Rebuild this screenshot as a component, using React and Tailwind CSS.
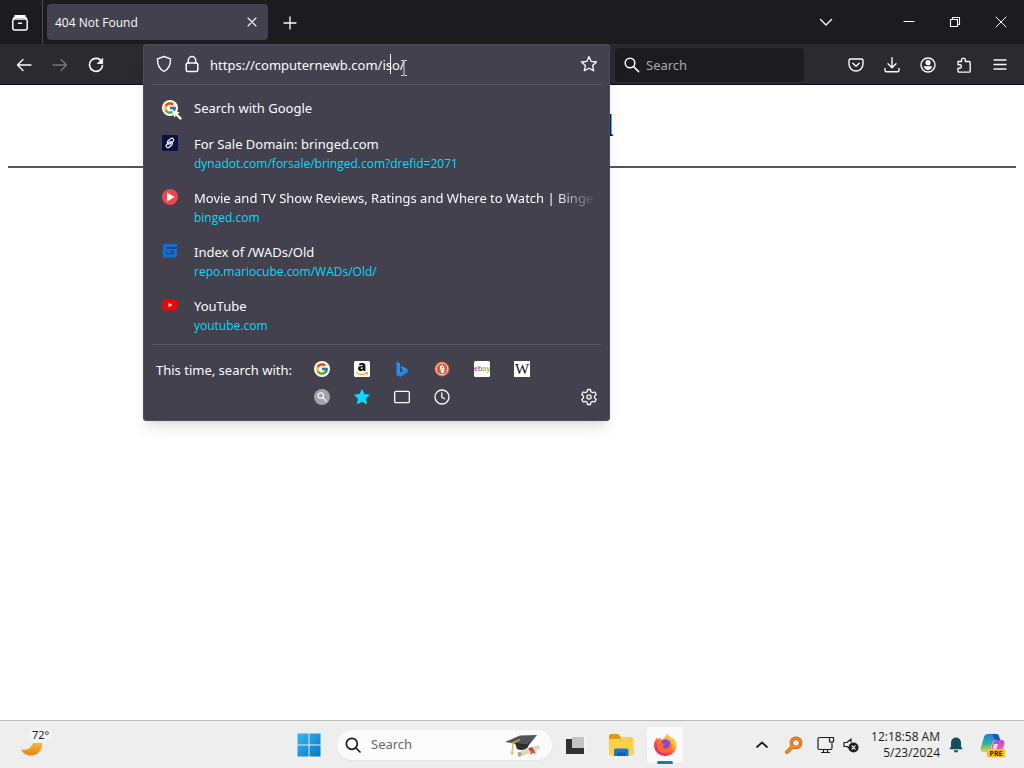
import React from "react";
import { FcGoogle } from "react-icons/fc";

function Icon({ children, className = "size-4", viewBox = "0 0 16 16", width = 1.3 }) {
  return (
    <svg
      viewBox={viewBox}
      className={`shrink-0 ${className}`}
      fill="none"
      stroke="currentColor"
      strokeWidth={width}
      strokeLinecap="round"
      strokeLinejoin="round"
      aria-hidden="true"
    >
      {children}
    </svg>
  );
}

function BarButton({ label, className = "w-9 pt-0.5", children }) {
  return (
    <button type="button" aria-label={label} className={`flex h-9 shrink-0 items-center justify-center ${className}`}>
      {children}
    </button>
  );
}

function GoogleIcon() {
  return (
    <span className="flex size-4 items-center justify-center rounded-full bg-white">
      <FcGoogle className="size-3.5" />
    </span>
  );
}

function TabStrip() {
  return (
    <header className="flex h-11 shrink-0 items-center bg-[#1c1b20] text-[#fbfbfe]">
      <div className="flex h-11 w-[43px] shrink-0 items-center justify-center border-r border-[#4a4950] pr-0.5">
        <BarButton label="Recent browsing">
          <Icon className="size-[18px]" viewBox="0 0 18 18" width={1.5}>
            <path d="M4 1.800h10M3.800 5h10.400a2 2 0 0 1 2 2v7a2 2 0 0 1-2 2H3.800a2 2 0 0 1-2-2V7a2 2 0 0 1 2-2zM2.500 5.200c0-1.300.7-2 1.800-2h9.400c1.100 0 1.800.7 1.800 2M7.500 9.200h3" />
          </Icon>
        </BarButton>
      </div>
      <div className="ml-1 flex h-9 w-[221px] items-center justify-between rounded bg-[#42414d] pl-2">
        <button type="button" className="pt-0.5 font-['Open_Sans',sans-serif] text-xs">404 Not Found</button>
        <button type="button" aria-label="Close tab" className="flex size-8 items-center justify-center">
          <Icon className="size-2.5" viewBox="0 0 10 10" width={1.1}>
            <path d="M1 1l8 8M9 1L1 9" />
          </Icon>
        </button>
      </div>
      <BarButton label="New tab" className="ml-1 w-9 pt-0.5">
        <Icon className="size-3.5" viewBox="0 0 14 14" width={1.300}>
          <path d="M7 1v12M1 7h12" />
        </Icon>
      </BarButton>
      <div className="flex-1" />
      <BarButton label="List all tabs" className="mr-[42px] w-9">
        <Icon className="size-3.5" viewBox="0 0 14 14" width={1.400}>
          <path d="M1.500 4.500L7 10l5.500-5.500" />
        </Icon>
      </BarButton>
      <BarButton label="Minimize" className="w-[46px]">
        <Icon className="size-3" viewBox="0 0 12 12" width={1.100}>
          <path d="M1 5.500h10" />
        </Icon>
      </BarButton>
      <BarButton label="Restore" className="w-[46px]">
        <Icon className="size-3" viewBox="0 0 12 12" width={1.100}>
          <path d="M1.500 3.500h7v7h-7zM3.500 3.500v-2h7v7h-2" />
        </Icon>
      </BarButton>
      <BarButton label="Close" className="w-[46px]">
        <Icon className="size-3" viewBox="0 0 12 12" width={1}>
          <path d="M1 1l10 10M11 1L1 11" />
        </Icon>
      </BarButton>
    </header>
  );
}

const suggestions = [
  {
    title: "For Sale Domain: bringed.com",
    url: "dynadot.com/forsale/bringed.com?drefid=2071",
    icon: (
      <svg viewBox="0 0 16 16" className="size-4" aria-hidden="true">
        <rect width="16" height="16" rx="1" fill="#0b1045" />
        <g fill="none" stroke="#fff" strokeWidth="1.200" transform="rotate(-40 8 8)">
          <rect x="2.800" y="7" width="7" height="3.600" rx="1.800" />
          <rect x="6.200" y="5.100" width="7" height="3.600" rx="1.800" />
        </g>
      </svg>
    ),
  },
  {
    title: "Movie and TV Show Reviews, Ratings and Where to Watch | Binge",
    url: "binged.com",
    fade: true,
    icon: (
      <svg viewBox="0 0 16 16" className="size-4" aria-hidden="true">
        <circle cx="8" cy="8" r="8" fill="#f0454b" />
        <path d="M5 3.600l7.600 4.400L5 12.400z" fill="#fff" />
      </svg>
    ),
  },
  {
    title: "Index of /WADs/Old",
    url: "repo.mariocube.com/WADs/Old/",
    icon: (
      <svg viewBox="0 0 16 16" className="size-4" aria-hidden="true">
        <path d="M2.500 1H15v3.200H4.700v1.600H15V12.500L13 14.500H1V2.500z" fill="#0f6fd6" />
        <path d="M4.500 4.700H15M4.500 8.500v2.300h6.800V8.300H7.500" fill="none" stroke="#1c3f73" strokeWidth="1.100" />
      </svg>
    ),
  },
  {
    title: "YouTube",
    url: "youtube.com",
    icon: (
      <svg viewBox="0 0 16 16" className="size-4" aria-hidden="true">
        <rect x="0.500" y="2.500" width="15" height="11" rx="3.500" fill="#f00" />
        <path d="M6.500 5.800l3.800 2.200-3.800 2.200z" fill="#fff" />
      </svg>
    ),
  },
];

const engines = [
  { name: "Google", icon: <GoogleIcon /> },
  {
    name: "Amazon",
    icon: (
      <svg viewBox="0 0 16 16" className="size-4 overflow-visible" aria-hidden="true">
        <rect width="16" height="16" rx="1.500" fill="#fff" />
        <text x="7.800" y="10" textAnchor="middle" fontFamily="Open Sans, sans-serif" fontWeight="800" fontSize="14" fill="#111">a</text>
        <path d="M2.500 11.500c3 2.700 7.500 2.700 10.500.6M11.500 11.300l2.200.2-.6 2" fill="none" stroke="#f5a623" strokeWidth="1.100" />
      </svg>
    ),
  },
  {
    name: "Bing",
    icon: (
      <svg viewBox="0 0 16 16" className="size-4" aria-hidden="true">
        <defs>
          <linearGradient id="bing" x1="0" y1="0" x2="1" y2="1">
            <stop offset="0" stopColor="#36b7f5" />
            <stop offset="1" stopColor="#1767d3" />
          </linearGradient>
        </defs>
        <path d="M2.500.5l3.500 1.700v9.500l-3.500 2z" fill="#2c8df0" />
        <path d="M7 5l5 2.200c2.700 1.100 2.500 3.800.8 5L6.300 15.900 2.500 13.700l6.500-3.700-1-1.400z" fill="url(#bing)" />
      </svg>
    ),
  },
  {
    name: "DuckDuckGo",
    icon: (
      <svg viewBox="0 0 16 16" className="size-4" aria-hidden="true">
        <circle cx="8" cy="8" r="7.500" fill="#de5833" />
        <circle cx="8" cy="8" r="5.900" fill="none" stroke="#fff" strokeWidth=".9" />
        <path d="M5.800 5.200c1.500-1.600 4.200-.9 4.400 1.600l.3 2.700-1.300 2.700c-1 .2-1.800-.2-2.100-.8z" fill="#fff" />
        <path d="M8.500 8h3v1.200h-3z" fill="#fdb515" />
        <circle cx="8.400" cy="6.300" r=".6" fill="#2d4f8e" />
      </svg>
    ),
  },
  {
    name: "eBay",
    icon: (
      <svg viewBox="0 0 16 16" className="size-4 overflow-visible" aria-hidden="true">
        <rect width="16" height="16" rx="1.500" fill="#fff" />
        <text x="8" y="10" textAnchor="middle" fontFamily="Liberation Sans, sans-serif" fontSize="7.500">
          <tspan fill="#c0286c">e</tspan>
          <tspan fill="#3a4fc4">b</tspan>
          <tspan fill="#b8942a">a</tspan>
          <tspan fill="#6fa512">y</tspan>
        </text>
      </svg>
    ),
  },
  {
    name: "Wikipedia",
    icon: (
      <svg viewBox="0 0 16 16" className="size-4 overflow-visible" aria-hidden="true">
        <rect width="16" height="16" fill="#fff" />
        <text x="8" y="13" textAnchor="middle" fontFamily="Liberation Serif, serif" fontSize="15" fill="#111">W</text>
      </svg>
    ),
  },
  {
    name: "Search mode",
    icon: (
      <svg viewBox="0 0 16 16" className="size-4" aria-hidden="true">
        <circle cx="8" cy="8" r="8" fill="#a3a2a6" />
        <g fill="none" stroke="#f1f1f3" strokeWidth="1.300" strokeLinecap="round">
          <circle cx="6.800" cy="6.600" r="2.800" />
          <path d="M9 8.900l3.200 3.100" />
        </g>
      </svg>
    ),
  },
  {
    name: "Bookmarks",
    icon: (
      <svg viewBox="0 0 16 16" className="size-4" aria-hidden="true">
        <path
          d="M8 .8l2.200 4.700 5.100.6-3.800 3.500 1 5.100L8 12.200l-4.500 2.500 1-5.100L.7 6.100l5.100-.6z"
          fill="#00ddff"
          stroke="#00ddff"
          strokeLinejoin="round"
        />
      </svg>
    ),
  },
  {
    name: "Tabs",
    icon: (
      <Icon>
        <rect x="0.700" y="2.300" width="14.600" height="11.400" rx="1.300" />
      </Icon>
    ),
  },
  {
    name: "History",
    icon: (
      <Icon>
        <circle cx="8" cy="8" r="7" />
        <path d="M7.800 4v4.200l2.800 1.600" />
      </Icon>
    ),
  },
];

function SuggestionPanel() {
  return (
    <div className="absolute inset-x-0 top-0 z-10 rounded bg-[#42414d] text-[#fbfbfe] shadow-lg ring-1 ring-inset ring-[#4d4c58]">
      <div className="mx-[9px] flex h-[41px] items-center border-b border-[#5a5965] px-[3px]">
        <button type="button" aria-label="Tracking protection" className="flex w-[18px] justify-center">
          <Icon className="size-[18px]" viewBox="0 0 18 18" width={1.400}>
            <path d="M9 1.500l6.500 2.300c.2 5.300-1 9.900-6.500 12.700C3.500 13.700 2.300 9.100 2.500 3.800z" />
          </Icon>
        </button>
        <button type="button" aria-label="Site information" className="ml-2.5 flex w-[18px] justify-center">
          <Icon className="size-[18px]" viewBox="0 0 18 18" width={1.500}>
            <rect x="3.200" y="8" width="11.600" height="8.500" rx="1.500" />
            <path d="M5.300 8V5.300a3.700 3.700 0 0 1 7.400 0V8" />
          </Icon>
        </button>
        <div className="relative ml-[9px] min-w-0 flex-1">
          <input
            type="text"
            aria-label="Address"
            defaultValue="https://computernewb.com/iso/"
            className="block h-8 w-full bg-transparent pt-0.5 text-[13px] outline-none"
          />
          <span className="absolute left-[180px] top-1.5 h-5 w-px bg-white" />
          <svg viewBox="0 0 8 16" className="absolute left-[190px] top-3 h-4 w-2" fill="none" stroke="#d8d8de" aria-hidden="true">
            <path d="M1 .5h2.500l.5.500.5-.5H7M4 1v14M1 15.500h2.500l.5-.5.5.5H7" />
          </svg>
        </div>
        <button type="button" aria-label="Bookmark this page" className="flex w-[18px] justify-center">
          <Icon className="size-[18px]" viewBox="0 0 18 18" width={1.300}>
            <path d="M9 1.600l2.200 4.800 5.300.6-3.900 3.600 1.100 5.200L9 13.200l-4.700 2.600 1.100-5.200L1.500 7l5.300-.6z" />
          </Icon>
        </button>
      </div>
      <ul className="pb-px pt-1">
        <li>
          <a href="#google" className="flex h-[38px] items-center px-[19px] text-[13px]">
            <span className="relative mr-4">
              <GoogleIcon />
              <svg viewBox="0 0 9 9" className="absolute -bottom-1 -right-1 size-2.5" aria-hidden="true">
                <path d="M0 0l7 2.200-2 1.300L9 7.500 7.500 9l-4-4-1.300 2z" fill="#fff" />
              </svg>
            </span>
            <span className="pt-0.5">Search with Google</span>
          </a>
        </li>
        {suggestions.map((item) => (
          <li key={item.url}>
            <a href={`https://${item.url}`} className="flex pb-1.5 pl-[19px] pr-3.5 pt-2">
              <span className="mr-4 shrink-0">{item.icon}</span>
              <span className="min-w-0 flex-1">
                <span
                  className={`block overflow-hidden whitespace-nowrap text-[13px] leading-[18px] ${
                    item.fade ? "mask-r-from-90%" : ""
                  }`}
                >
                  {item.title}
                </span>
                <span className="block truncate font-['Open_Sans',sans-serif] text-xs leading-[22px] text-[#00ddff]">{item.url}</span>
              </span>
            </a>
          </li>
        ))}
      </ul>
      <div className="mx-[9px] flex border-t border-[#5a5965] px-[3px] py-2.5">
        <p className="mr-3 w-[135px] shrink-0 whitespace-nowrap pl-px pt-[5px] text-[13px] leading-5">This time, search with:</p>
        <div className="grid min-w-0 grid-cols-6">
          {engines.map((engine) => (
            <button key={engine.name} type="button" aria-label={engine.name} className="flex h-7 w-10 items-center justify-center">
              {engine.icon}
            </button>
          ))}
        </div>
        <button type="button" aria-label="Search settings" className="ml-auto flex h-7 w-[18px] items-center justify-center self-end">
          <Icon className="size-[18px]" viewBox="0 0 18 18" width={1.300}>
            <path d="M7.600 1.500h2.800l.6 2.300 1.500.9 2.300-.7 1.400 2.500-1.700 1.600v1.800l1.700 1.600-1.400 2.500-2.300-.7-1.500.9-.6 2.300H7.600L7 14.200l-1.500-.9-2.300.7-1.400-2.500 1.700-1.600V8.100L1.800 6.500 3.200 4l2.300.7L7 3.800z" />
            <circle cx="9" cy="9" r="2.100" />
          </Icon>
        </button>
      </div>
    </div>
  );
}

function NavBar() {
  return (
    <nav className="flex h-[41px] shrink-0 items-center border-b border-[#0d0c12] bg-[#2b2a2f] px-1.5 text-[#fbfbfe]">
      <BarButton label="Back">
        <Icon>
          <path d="M15 8H1.500M7 2.500L1.500 8 7 13.500" />
        </Icon>
      </BarButton>
      <BarButton label="Forward">
        <Icon className="size-4 text-[#77767c]">
          <path d="M1 8h13.500M9 2.500L14.500 8 9 13.500" />
        </Icon>
      </BarButton>
      <BarButton label="Reload">
        <Icon width={1.600}>
          <path d="M13.600 4.500A6.500 6.500 0 1 0 14.500 8.500" />
          <path d="M14.700 1.500v5h-5z" fill="currentColor" strokeWidth=".8" />
        </Icon>
      </BarButton>
      <div className="relative ml-[29px] h-full min-w-0 flex-1">
        <SuggestionPanel />
      </div>
      <label className="ml-[5px] mr-[34px] mt-0.5 flex h-[34px] w-[189px] items-center rounded bg-[#1c1b20] pl-2">
        <Icon className="size-[18px]" viewBox="0 0 18 18" width={1.500}>
          <circle cx="7" cy="7" r="4.800" />
          <path d="M10.600 10.600l5 5" />
        </Icon>
        <input type="text" aria-label="Search the web" placeholder="Search" className="ml-[5px] w-full min-w-0 bg-transparent pt-px text-[13px] outline-none placeholder:text-[#aaa9ad]" />
      </label>
      <BarButton label="Save to Pocket">
        <Icon width={1.400}>
          <path d="M2.500 2h11a1.500 1.500 0 0 1 1.500 1.500V7a7 7 0 0 1-14 0V3.500A1.500 1.500 0 0 1 2.500 2zM4.800 6.200L8 9.200l3.200-3" />
        </Icon>
      </BarButton>
      <BarButton label="Downloads">
        <Icon width={1.400}>
          <path d="M8 .8v9.700M4 6.800l4 4 4-4M1 11.500v1.700A1.600 1.600 0 0 0 2.600 14.800h10.800a1.600 1.600 0 0 0 1.600-1.600v-1.700" />
        </Icon>
      </BarButton>
      <BarButton label="Account">
        <Icon width={1.400}>
          <circle cx="8" cy="8" r="7" />
          <circle cx="8" cy="5.700" r="1.900" fill="currentColor" />
          <path d="M4.300 9.500h7.400c0 1.900-1.500 3.200-3.700 3.200s-3.700-1.300-3.700-3.200z" fill="currentColor" strokeWidth=".6" />
        </Icon>
      </BarButton>
      <BarButton label="Extensions">
        <Icon width={1.400}>
          <path d="M2 4.500h3.500V3a1.900 1.900 0 0 1 3.800 0v1.500H13a1.200 1.200 0 0 1 1.200 1.200v8.200A1.200 1.200 0 0 1 13 15.100H3.200A1.200 1.200 0 0 1 2 13.900v-2.700h1.700a1.700 1.700 0 0 0 0-3.500H2z" />
        </Icon>
      </BarButton>
      <BarButton label="Application menu">
        <Icon className="size-3.5" viewBox="0 0 14 14" width={1.300}>
          <path d="M1 2h12M1 6.500h12M1 11h12" />
        </Icon>
      </BarButton>
    </nav>
  );
}

function Taskbar() {
  return (
    <footer className="flex h-12 shrink-0 items-center border-t border-[#bdbdbd] bg-[#eeeeee] text-[#1c1c1c]">
      <div className="flex flex-1 basis-0 pl-5">
        <button type="button" aria-label="Weather, 72 degrees" className="relative h-9 w-9">
          <svg viewBox="0 0 24 20" className="absolute bottom-1 left-0 h-5 w-6" aria-hidden="true">
            <defs>
              <linearGradient id="moon" x1="0" y1="0" x2="0" y2="1">
                <stop offset="0" stopColor="#ffb42b" />
                <stop offset="1" stopColor="#e2841a" />
              </linearGradient>
            </defs>
            <path d="M1 10.500c5 1.200 10-.7 12-6.500h9c1 6-3.500 12-10 12.500-5 .4-9.300-2-11-6z" fill="url(#moon)" />
          </svg>
          <span className="absolute left-2.5 top-0 rounded-full bg-[#f3f3f3] px-0.5 text-[11px] leading-4">72°</span>
        </button>
      </div>
      <div className="flex shrink-0 items-center pr-[46px]">
        <button type="button" aria-label="Start" className="mr-4 shrink-0">
          <svg viewBox="0 0 24 24" className="size-6" aria-hidden="true">
            <defs>
              <linearGradient id="win" x1="0" y1="0" x2="1" y2="1">
                <stop offset="0" stopColor="#35b8f1" />
                <stop offset="1" stopColor="#0873c9" />
              </linearGradient>
            </defs>
            <path d="M.5.500h11v11H.5zM12.500.500h11v11h-11zM.5 12.500h11v11H.5zM12.500 12.500h11v11h-11z" fill="url(#win)" />
          </svg>
        </button>
        <label className="flex h-[30px] w-[215px] items-center rounded-full bg-[#fbfbfb] pl-2 pr-2.5 shadow-xs">
          <Icon className="size-4" width={1.700}>
            <circle cx="6.800" cy="6.800" r="5.500" />
            <path d="M10.800 10.800l4.200 4.200" />
          </Icon>
          <input type="text" aria-label="Search Windows" placeholder="Search" className="ml-2.5 w-full min-w-0 bg-transparent text-[13px] outline-none placeholder:text-[#696969]" />
          <svg viewBox="0 0 38 24" className="h-6 w-[38px] shrink-0" aria-hidden="true">
            <path d="M11 10l2 6c4 2 9 1 11-2l1-5z" fill="#2e3033" />
            <path d="M1 9l15-6.500L33 2 23 11.500z" fill="#505359" />
            <path d="M1 9l22 2.500L33 2l-9 11z" fill="#292b2f" />
            <path d="M16 6.500L9 10l-.5 7" fill="none" stroke="#e9b63c" strokeWidth="1.300" />
            <path d="M8 15.500l-1.500 6 3.500-.5z" fill="#f3c44c" />
            <path d="M14 19.500L34 12l2.500 3.500L17 23.500z" fill="#ddd7b8" />
            <ellipse cx="15.500" cy="21.300" rx="1.800" ry="2.400" fill="#aaa68f" />
            <path d="M24 15.500l4-1.500 2.500 4-3 1.200z" fill="#c7442e" />
            <path d="M27 18l-1 4 3-2 3 1-2-4z" fill="#e15b3c" />
          </svg>
        </label>
        <button type="button" aria-label="Task view" className="ml-3.5 shrink-0">
          <svg viewBox="0 0 20 20" className="size-5" aria-hidden="true">
            <path d="M0 4h18v15H0z" fill="#303132" />
            <path d="M6 2h14v11H6z" fill="#c3c3c3" />
            <path d="M18 1h2v13h-2z" fill="#f4f4f4" />
          </svg>
        </button>
        <button type="button" aria-label="File Explorer" className="ml-[22px] shrink-0">
          <svg viewBox="0 0 26 24" className="h-6 w-[26px]" aria-hidden="true">
            <path d="M1 3a2 2 0 0 1 2-2h7l3 3v8H1z" fill="#dc9c12" />
            <path d="M1 6h10l3-2h10a1.500 1.500 0 0 1 1.500 1.500v15A2 2 0 0 1 23.500 22.500H3a2 2 0 0 1-2-2z" fill="#ffcf48" />
            <path d="M6 23v-5.500A2 2 0 0 1 8 15.500h10.500a2 2 0 0 1 2 2V23z" fill="#1679d0" />
            <path d="M9 19.500h8.500V23H9z" fill="#0b5fae" />
          </svg>
        </button>
        <button type="button" aria-label="Firefox" className="relative ml-[13px] flex h-9 w-9 shrink-0 items-center justify-center rounded bg-[#fafafa]">
          <svg viewBox="0 0 24 24" className="size-6" aria-hidden="true">
            <defs>
              <linearGradient id="fox" x1=".85" y1=".05" x2=".2" y2=".95">
                <stop offset="0" stopColor="#ffe14a" />
                <stop offset=".4" stopColor="#ff9622" />
                <stop offset=".7" stopColor="#ff3f4f" />
                <stop offset="1" stopColor="#e1208b" />
              </linearGradient>
            </defs>
            <path d="M13.500.500c2 1.300 3.500 3 4 5l1-1.500c3 2.500 5 5.500 5 9A11.300 11.300 0 0 1 1 13C1 9.500 2 7 4 4.500l.5 2 2.500-2 1 2.200c2.500-.4 5-2.700 5.500-6.200z" fill="url(#fox)" />
            <circle cx="12.500" cy="12" r="5.500" fill="#8146e2" />
            <path d="M4 9.500c2.500-.8 4.500-.3 5.500 1l2.500.3c-.5 1.300-2.500 1.500-2.500 2.800.5 1.900 3 2.400 5 1.400 1.800-1 2.500-3 2-5 1.700 1.500 2.200 3.700 1.500 5.700-1 3-3.500 4.300-6.500 4.300-5 0-8-4.500-7.500-10.500z" fill="#ff6a30" />
            <path d="M13.500.500c5 3 3 5.500 6 8.500 2 3 .5 7-1 8.500 4-2 5.500-7 3-11l-2-1-1.500 0c-1-2.500-2.500-4-4.500-5z" fill="#ffc72c" />
          </svg>
          <span className="absolute -bottom-px left-2.5 h-[3px] w-4 rounded-full bg-[#177e94]" />
        </button>
      </div>
      <div className="flex flex-1 basis-0 items-center justify-end pr-[18px]">
        <button type="button" aria-label="Show hidden icons" className="mr-4 shrink-0">
          <Icon className="size-3.5" viewBox="0 0 14 14" width={1.700}>
            <path d="M2 9l5-4.500L12 9" />
          </Icon>
        </button>
        <button type="button" aria-label="Sign-in key" className="mr-3.5 shrink-0">
          <svg viewBox="0 0 18 18" className="size-[18px]" fill="none" aria-hidden="true">
            <circle cx="11" cy="6.800" r="4.600" stroke="#a94d0c" strokeWidth="3.400" />
            <path d="M7.500 10.500L2 16" stroke="#a94d0c" strokeWidth="3.600" strokeLinecap="round" />
            <circle cx="11" cy="6.800" r="4.600" stroke="#ff8516" strokeWidth="2.400" />
            <path d="M7.500 10.500L2 16" stroke="#ff8516" strokeWidth="2.600" strokeLinecap="round" />
          </svg>
        </button>
        <button type="button" aria-label="Network" className="mr-2 shrink-0">
          <Icon className="size-[18px]" viewBox="0 0 18 18" width={1.200}>
            <path d="M12 1.500H2.500A1.500 1.500 0 0 0 1 3v9a1.500 1.500 0 0 0 1.500 1.500h11A1.500 1.500 0 0 0 15 12V7.500M6.500 13.500V16M10.500 13.500V16M4.500 16.500h8M12.500 1.500h4V5a1.200 1.200 0 0 1-1.200 1.200h-1.600A1.200 1.200 0 0 1 12.500 5z" />
          </Icon>
        </button>
        <button type="button" aria-label="Volume muted" className="mr-3 shrink-0">
          <Icon className="size-4" width={1.200}>
            <path d="M6 11L4 9.500H1v-4h3L8 2v3" />
            <circle cx="10.500" cy="10.500" r="4.500" fill="#1c1c1c" />
            <path d="M8.900 8.900l3.200 3.200M12.100 8.900l-3.200 3.200" stroke="#fff" />
          </Icon>
        </button>
        <time dateTime="2024-05-23T00:18:58" className="whitespace-nowrap text-right font-['Open_Sans',sans-serif] text-xs">
          12:18:58 AM
          <br />
          5/23/2024
        </time>
        <button type="button" aria-label="Notifications" className="ml-2 shrink-0">
          <svg viewBox="0 0 16 16" className="size-4" fill="#174e5b" aria-hidden="true">
            <path d="M8 .5a5 5 0 0 1 5 5v4l1.700 2.700H1.300L3 9.500v-4a5 5 0 0 1 5-5zM5.800 13.200h4.400a2.200 2.200 0 0 1-4.400 0z" />
          </svg>
        </button>
        <button type="button" aria-label="Copilot preview" className="ml-4 shrink-0">
          <svg viewBox="0 0 26 26" className="size-[26px] overflow-visible" aria-hidden="true">
            <defs>
              <linearGradient id="copA" x1="0" y1="0" x2="0" y2="1">
                <stop offset="0" stopColor="#1a7fdc" />
                <stop offset=".5" stopColor="#24b3a5" />
                <stop offset="1" stopColor="#e5d33c" />
              </linearGradient>
              <linearGradient id="copB" x1="0" y1="0" x2="0" y2="1">
                <stop offset="0" stopColor="#a050e5" />
                <stop offset=".6" stopColor="#ef5b97" />
                <stop offset="1" stopColor="#ff9a54" />
              </linearGradient>
            </defs>
            <path d="M8 2h8c2 0 2.700 1 3.200 3l.8 3h-4c-2 0-3 1-3.600 3l-1.900 6C10 19 9 20 7 20H4c-3 0-4-2-3-5L4 5c.6-2 2-3 4-3z" fill="url(#copA)" />
            <path d="M12 2h4c2 0 2.700 1 3.200 3l.8 3h-4c-1 0-1.500-.5-2-2z" fill="#2451c4" />
            <path d="M17 8h4c3 0 4 2 3 5l-2.500 8H10l2.500-9c.7-2.500 2-4 4.500-4z" fill="url(#copB)" />
            <path d="M14 12h4l-2 7h-4z" fill="#f5d3f2" />
            <rect x="7" y="17" width="18" height="8" rx="1.500" fill="#ffb91b" />
            <text x="16" y="23.500" textAnchor="middle" fontFamily="Open Sans, sans-serif" fontWeight="700" fontSize="7" fill="#3a2600">PRE</text>
          </svg>
        </button>
      </div>
    </footer>
  );
}

export default function App() {
  return (
    <div className="flex min-h-screen flex-col bg-white font-['Noto_Sans','Open_Sans',sans-serif]">
      <TabStrip />
      <NavBar />
      <main className="flex-1 px-2 font-['Liberation_Serif',serif]">
        <h1 className="py-5 text-center text-[32px] font-bold leading-10 text-[#10204f]">404 Not Found</h1>
        <hr className="mt-px border-t-2 border-[#555]" />
      </main>
      <Taskbar />
    </div>
  );
}
